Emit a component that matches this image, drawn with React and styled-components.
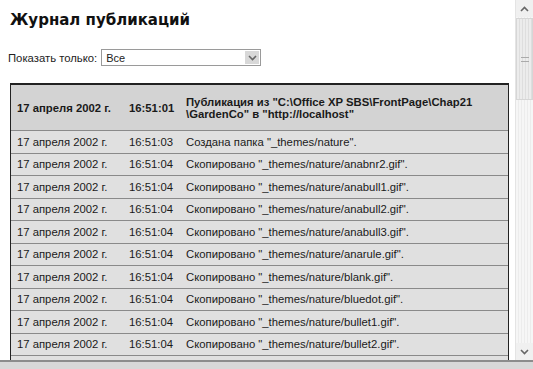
import React from "react";
import styled, { createGlobalStyle } from "styled-components";

const Global = createGlobalStyle`
  html, body { margin: 0; padding: 0; background: #fff; }
  body { width: 533px; height: 369px; overflow: hidden; font-family: "Liberation Sans", Arial, sans-serif; }
`;

const Frame = styled.div`
  width: 533px;
  height: 369px;
  display: flex;
  flex-direction: column;
  overflow: hidden;
`;

const Body = styled.div`
  flex: 1;
  display: flex;
  min-height: 0;
`;

const Content = styled.main`
  flex: 1;
  overflow: hidden;
  padding: 0 9px 0 10px;
`;

const Title = styled.h1`
  margin: 11px 0 0 0;
  font-family: "DejaVu Sans", Verdana, sans-serif;
  font-weight: bold;
  font-size: 15px;
  line-height: 19px;
  color: #111;
`;

const FilterRow = styled.div`
  display: flex;
  align-items: center;
  gap: 4px;
  margin: 19px 0 0 -2px;
  font-size: 11.3px;
  color: #222;
`;

const Select = styled.div`
  width: 154px;
  height: 15px;
  border: 1px solid #9a9a9a;
  display: flex;
  align-items: center;
  justify-content: space-between;
  padding-left: 4px;
  font-size: 11px;
  background: #fff;
`;

const SelectButton = styled.div`
  width: 14px;
  height: 13px;
  margin-right: 1px;
  background: #d8d8d8;
  display: flex;
  align-items: center;
  justify-content: center;
`;

const Table = styled.div`
  margin-top: 17px;
  width: 497px;
  border-left: 1px solid #222;
  border-right: 1px solid #222;
  border-top: 2px solid #222;
`;

const Row = styled.div`
  display: grid;
  grid-template-columns: 118px 57px 1fr;
  align-items: center;
  height: ${(p) => (p.$head ? "46px" : "22.5px")};
  box-sizing: border-box;
  border-bottom: 1px solid #8a8a8a;
  background: ${(p) => (p.$head ? "#d3d3d3" : "#e0e0e0")};
  font-size: 11.3px;
  font-weight: ${(p) => (p.$head ? "bold" : "normal")};
  color: #1a1a1a;
  line-height: 12px;
`;

const Cell = styled.div`
  padding-left: ${(p) => p.$pad || 0}px;
  white-space: ${(p) => (p.$wrap ? "normal" : "nowrap")};
  padding-right: 6px;
`;

const Scrollbar = styled.div`
  width: 17px;
  display: flex;
  flex-direction: column;
  background: repeating-linear-gradient(90deg, #f6f6f6 0 2px, #ececec 2px 3px);
  border-left: 1px solid #e4e4e4;
`;

const Arrow = styled.div`
  height: 17px;
  display: flex;
  align-items: center;
  justify-content: center;
  background: #f0f0f0;
`;

const Track = styled.div`
  flex: 1;
  display: flex;
  flex-direction: column;
`;

const Thumb = styled.div`
  margin-top: 1px;
  height: 82px;
  box-sizing: border-box;
  border: 1px solid #d6d6d6;
  background: repeating-linear-gradient(90deg, #ececec 0 2px, #dedede 2px 3px);
  display: flex;
  align-items: center;
  justify-content: center;
`;

const Grip = styled.div`
  width: 8px;
  height: 5px;
  border-top: 1px solid #aaa;
  border-bottom: 1px solid #aaa;
  box-sizing: border-box;
`;

const BottomEdge = styled.div`
  height: 7px;
  border-top: 2px solid #8c8c8c;
  background: #d8d8d8;
`;

const rows = [
  ["16:51:03", "Создана папка \"_themes/nature\"."],
  ["16:51:04", "Скопировано \"_themes/nature/anabnr2.gif\"."],
  ["16:51:04", "Скопировано \"_themes/nature/anabull1.gif\"."],
  ["16:51:04", "Скопировано \"_themes/nature/anabull2.gif\"."],
  ["16:51:04", "Скопировано \"_themes/nature/anabull3.gif\"."],
  ["16:51:04", "Скопировано \"_themes/nature/anarule.gif\"."],
  ["16:51:04", "Скопировано \"_themes/nature/blank.gif\"."],
  ["16:51:04", "Скопировано \"_themes/nature/bluedot.gif\"."],
  ["16:51:04", "Скопировано \"_themes/nature/bullet1.gif\"."],
  ["16:51:04", "Скопировано \"_themes/nature/bullet2.gif\"."],
];

const Chevron = ({ up }) => (
  <svg width="9" height="6" viewBox="0 0 9 6">
    <path d={up ? "M1 5 L4.5 1.5 L8 5" : "M1 1 L4.5 4.5 L8 1"} fill="none" stroke="#666" strokeWidth="1.6" />
  </svg>
);

export default function App() {
  return (
    <Frame>
      <Global />
      <Body>
        <Content>
          <Title>Журнал публикаций</Title>
          <FilterRow>
            <span>Показать только:</span>
            <Select>
              <span>Все</span>
              <SelectButton>
                <Chevron />
              </SelectButton>
            </Select>
          </FilterRow>
          <Table>
            <Row $head>
              <Cell $pad={6}>17 апреля 2002 г.</Cell>
              <Cell>16:51:01</Cell>
              <Cell $wrap>
                Публикация из "C:\Office XP SBS\FrontPage\Chap21 \GardenCo" в "http://localhost"
              </Cell>
            </Row>
            {rows.map(([t, d], i) => (
              <Row key={i}>
                <Cell $pad={6}>17 апреля 2002 г.</Cell>
                <Cell>{t}</Cell>
                <Cell>{d}</Cell>
              </Row>
            ))}
            <Row />
          </Table>
        </Content>
        <Scrollbar>
          <Arrow>
            <Chevron up />
          </Arrow>
          <Track>
            <Thumb>
              <Grip />
            </Thumb>
          </Track>
          <Arrow>
            <Chevron />
          </Arrow>
        </Scrollbar>
      </Body>
      <BottomEdge />
    </Frame>
  );
}
